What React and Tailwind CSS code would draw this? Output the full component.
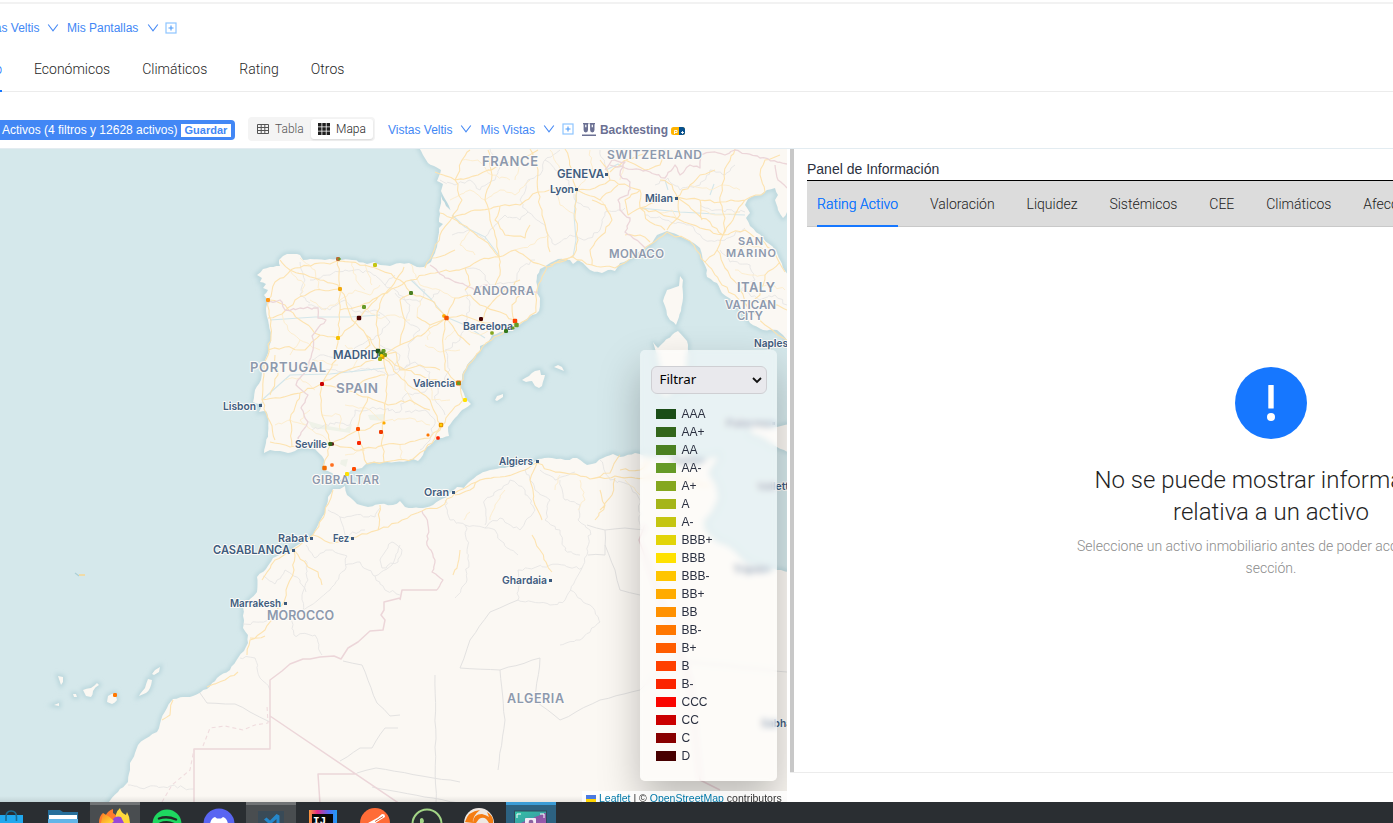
import React from "react";

const RATINGS = [
  ["AAA", "#1b4d17"], ["AA+", "#33661b"], ["AA", "#4b8021"], ["AA-", "#669a27"],
  ["A+", "#85a71f"], ["A", "#a5b518"], ["A-", "#c4c511"], ["BBB+", "#e2d408"],
  ["BBB", "#ffe100"], ["BBB-", "#ffc500"], ["BB+", "#ffab00"], ["BB", "#ff9100"],
  ["BB-", "#ff7700"], ["B+", "#ff5d00"], ["B", "#ff4000"], ["B-", "#fb2500"],
  ["CCC", "#fa0500"], ["CC", "#cb0000"], ["C", "#880000"], ["D", "#470000"],
];

// Splits every segment of a polyline into short steps and nudges them, so lines look surveyed.
function roughen(path, step, amp, seed) {
  let s = seed;
  const rand = () => {
    s = (s * 1664525 + 1013904223) % 4294967296;
    return s / 4294967296 - 0.5;
  };
  const tokens = path.match(/[MLZ]|-?[\d.]+/g);
  let out = "";
  let prev = null;
  let start = false;
  for (let i = 0; i < tokens.length; ) {
    const t = tokens[i];
    if (t === "Z") { out += "Z"; i++; continue; }
    if (t === "M") { start = true; i++; continue; }
    if (t === "L") { i++; continue; }
    const x = +t;
    const y = +tokens[i + 1];
    i += 2;
    if (start) {
      out += `M${x} ${y}`;
      start = false;
    } else {
      const dx = x - prev[0];
      const dy = y - prev[1];
      const n = Math.max(1, Math.round(Math.hypot(dx, dy) / step));
      for (let k = 1; k < n; k++) {
        const px = prev[0] + (dx * k) / n + rand() * amp * 2;
        const py = prev[1] + (dy * k) / n + rand() * amp * 2;
        out += `L${px.toFixed(1)} ${py.toFixed(1)}`;
      }
      out += `L${x} ${y}`;
    }
    prev = [x, y];
  }
  return out;
}

const LAND = [
  // Iberia, France and Italy
  "M418 145 L423 155 L428 163 L434 166 L441 170 L439 176 L437 181 L443 184 L441 191 L445 199 L449 206 L453 214 L446 206 L441 196 L439 222 L443 224 L439 228 L437 247 L435 253 L431 262 L424 267 L417 267 L409 263 L400 263 L390 266 L380 265 L374 262 L367 264 L352 260 L338 259 L325 260 L310 259 L303 260 L300 255 L293 254 L287 254 L283 256 L279 260 L280 266 L270 267 L263 269 L257 275 L262 278 L260 282 L266 284 L263 288 L268 290 L264 295 L268 302 L266 308 L268 320 L271 337 L269 350 L266 358 L263 367 L261 380 L255 390 L253 402 L259 404 L263 402 L259 412 L266 411 L268 417 L268 433 L266 443 L264 453 L270 450 L275 451 L280 451 L288 453 L295 451 L303 448 L315 449 L322 456 L325 462 L324 470 L332 473 L340 480 L345 478 L347 474 L353 469 L362 468 L367 463 L383 462 L395 462 L407 461 L413 459 L418 461 L423 455 L427 447 L438 438 L449 436 L448 427 L455 418 L462 410 L471 404 L465 397 L460 387 L462 375 L467 365 L480 350 L480 346 L486 344 L492 335 L508 330 L517 327 L525 320 L539 311 L540 298 L537 293 L537 275 L540 269 L547 265 L558 259 L570 260 L573 264 L578 260 L583 263 L590 270 L602 273 L608 270 L615 271 L620 263 L628 260 L642 250 L652 243 L657 235 L667 231 L678 235 L690 241 L700 248 L703 261 L707 270 L707 277 L717 283 L722 293 L732 300 L743 313 L750 323 L763 330 L777 330 L783 335 L790 345 L790 278 L785 271 L780 260 L775 250 L763 238 L750 226 L746 218 L750 213 L745 205 L748 199 L753 196 L760 195 L767 190 L775 188 L778 195 L775 200 L778 210 L783 218 L790 210 L790 145 Z",
  "M680 276 L683 280 L683 298 L681 311 L676 325 L670 320 L667 315 L665 306 L663 301 L667 290 L679 286 Z",
  "M653 342 L658 348 L664 342 L672 335 L678 331 L687 341 L688 352 L686 380 L682 389 L674 389 L668 397 L660 395 L660 370 L656 352 Z",
  "M522 380 L529 376 L535 371 L540 370 L541 375 L545 375 L542 386 L539 388 L535 386 L532 381 L526 382 Z",
  "M554 367 L558 365 L562 367 L564 371 Z",
  "M495 400 L497 396 L503 394 L503 397 L497 401 Z",
  "M750 428 L757 425 L765 429 L777 427 L790 424 L790 452 L784 450 L777 447 L763 438 L751 434 Z",
  // North Africa
  "M107 804 L118 792 L128 782 L130 770 L130 763 L135 753 L138 745 L145 739 L157 732 L161 720 L167 708 L173 699 L183 697 L193 696 L207 689 L217 678 L230 670 L238 658 L244 651 L248 643 L248 635 L243 628 L244 620 L243 607 L250 599 L257 592 L257 577 L266 569 L273 558 L293 548 L304 542 L313 535 L320 521 L325 513 L328 497 L333 489 L340 489 L345 486 L347 495 L357 504 L368 507 L380 504 L393 505 L400 501 L405 507 L423 508 L433 505 L440 500 L447 497 L452 491 L457 487 L464 488 L468 483 L480 474 L490 470 L500 468 L513 467 L533 463 L538 459 L552 458 L565 460 L577 458 L587 465 L596 463 L603 458 L613 454 L620 457 L635 453 L650 457 L668 456 L683 452 L696 457 L705 459 L718 455 L716 462 L709 472 L717 487 L718 499 L712 512 L704 521 L705 530 L716 541 L730 547 L747 563 L760 567 L777 570 L790 572 L790 806 Z",
  // Canary Islands
  "M58 676 L63 677 L63 682 L61 685 Z", "M73 694 L76 694 L77 697 L74 697 Z", "M54 705 L59 703 L59 706 Z",
  "M83 690 L91 688 L97 683 L99 685 L93 691 L91 697 L86 696 Z",
  "M108 696 L115 693 L117 700 L112 704 L107 702 Z",
  "M139 696 L145 688 L148 679 L152 680 L150 688 L146 693 Z", "M152 674 L155 670 L160 667 L159 672 L154 675 Z",
];

const ROADS = `M382 355 L378 335 L377 318 L382 298 L396 280 L404 267 M382 355 L366 335 L352 320 L346 300 L338 285 L315 278 L290 270 L280 260 M382 355 L356 367 L340 373 L321 384 L300 393 L280 398 L262 400
M382 355 L388 375 L386 400 L384 421 L370 428 L358 430 L344 438 L331 444 L325 460 L324 470 M384 421 L382 440 L384 462 M358 430 L363 452 L367 464 L384 462 L413 459 L425 450 L440 430 L449 414 L463 400 L460 383 L468 365 L486 343 L505 331 L518 325 L536 312 L537 290 L547 267 L573 257 L592 265 L615 268 L642 251 L667 232 L690 241 L705 262 L722 285 L746 305 L765 325 L787 340
M382 355 L400 345 L425 333 L446 318 L462 315 L481 322 L500 326 L515 324 M446 318 L430 300 L411 293 L400 280 L380 270 L350 262 L320 263 L295 268 L275 282 L268 300 L271 335 L264 370 L262 400 M382 355 L405 370 L430 380 L458 383 M382 355 L408 385 L430 400 L441 425 L430 438 L405 444 L384 445 L360 450 L331 444 M446 318 L443 345 L445 370 L459 383 M331 444 L312 444 L290 447 L270 442 M262 400 L268 418 L275 440 M331 444 L322 415 L321 384 L336 360 L338 338 L340 310 L340 290 L338 260 M338 338 L320 335 L300 320 L285 305 L270 300 M338 338 L360 318 L378 297 L411 280 M340 310 L360 306 L378 297 M268 350 L285 347 L305 350 L320 335 M275 355 L278 375 L270 395 M268 318 L282 314 L295 300 L315 290 L338 289 M300 393 L290 420 L292 447 M321 384 L345 390 L368 397 L388 405 L410 400 L430 410 M368 397 L360 415 L358 430 M385 375 L365 380 L350 390 M360 355 L370 345 L366 335 M382 355 L396 352 L400 370 L420 365 L440 370 M400 345 L405 320 L400 300 L411 293 M417 317 L430 325 L446 318 L455 330 L470 345 M446 318 L455 298 L470 295 L480 305 L500 312 L515 320 M481 322 L490 305 L505 290 L520 280 M515 322 L512 305 L520 295
M411 280 L425 275 L440 272 L465 268 L480 260 L499 257 L515 250 L530 260 L547 267 M425 268 L432 255 L440 235 L452 218 L470 230 L488 243 L499 257 L495 235 L490 220 L485 200 L492 175 L488 150 M452 218 L462 200 L455 180 L462 160 L470 150 M452 218 L475 210 L500 206 L520 205 L538 192 L555 188 L577 190 M452 218 L440 213 M435 172 L455 180 L478 175 L500 165 L520 158 L538 150 M538 192 L538 170 L530 149 M538 192 L542 215 L548 235 L550 252 M577 190 L575 215 L578 240 L574 255 L550 265 M577 190 L595 188 L610 180 L608 172 L600 160 M577 190 L572 170 L565 149 M577 190 L600 200 L618 185 M592 265 L590 250 L602 235 L612 220 L605 205 L592 200 M499 257 L500 275 L493 290 M500 206 L495 220 L505 235 L525 238 L530 225 M455 250 L445 255 L432 258 M465 268 L470 285 L465 290 M610 172 L625 160 L640 155 L655 149 M625 160 L645 170 L660 165 L665 150 M610 180 L640 190 L640 208 L655 202 L677 197 L700 200 L720 202 L745 200 L765 192 M640 208 L650 222 L665 230 M640 208 L660 213 L680 220 L700 228 L723 235 L745 230 L765 243 L777 258 L785 272 M677 197 L680 215 L667 230 M677 197 L695 212 L710 222 L723 235 L717 250 L705 262 M717 250 L725 268 L738 285 L746 305 L765 300 L787 310 M677 197 L672 185 L660 180 M677 197 L690 185 L700 175 L715 170 M700 200 L702 220 M723 235 L725 218 L720 202 L722 185 L727 165 L735 149 M745 200 L735 215 L723 235 M765 192 L760 175 L765 160 L780 155 M746 305 L760 295 L765 275 L780 262 M640 190 L625 200 L628 215 L640 208 M625 235 L640 235 L650 242
M333 490 L325 513 L313 535 L294 549 L275 560 L262 580 M313 535 L330 543 L352 538 L378 530 L402 520 L422 511 L440 507 L455 493 L480 480 L500 477 L525 470 L537 463 L550 470 L570 474 L590 479 L615 476 L635 478 L660 475 L690 482 L710 485 M378 530 L380 505 M294 550 L294 570 L286 590 L284 602 L265 630 L250 640 L247 655 M294 550 L308 567 L318 572 L322 585 M265 636 L250 638 M173 700 L170 715 L162 720 M207 687 L225 680 L238 672 M537 463 L530 480 L535 505 L542 520 M590 479 L610 473 L620 455 M600 490 L605 505 L595 520 M620 470 L640 470 L650 460 M480 480 L470 490 L455 495 M532 535 L540 550 L552 572 M615 478 L612 495 L600 510 M460 550 L458 563 L453 575`;

const MINOR_ROADS = `M290 270 L305 285 L300 295 M300 258 L315 270 L320 290 M352 262 L356 280 L365 290 M365 264 L372 285 M411 264 L420 285 L440 290 L455 298 M417 317 L420 300 M282 314 L288 330 L300 340 L290 355 M300 365 L315 360 L338 365 M345 345 L360 355 L350 370 M300 340 L320 350 M405 370 L405 390 L415 405 M430 380 L432 400 L450 400 M345 405 L370 410 L384 421 L410 418 L430 425 M340 430 L340 415 L322 415 M310 410 L300 420 L312 430 L331 444 M345 455 L365 450 M400 444 L402 460 M425 345 L440 352 L460 350 M430 325 L428 340 M455 330 L445 340 M465 330 L480 335 L492 330 M310 300 L325 310 L340 300 L355 290 L370 295 L380 285 M360 306 L378 318 L395 315 L410 320 M285 380 L300 378 L315 390 M275 425 L290 420 L305 425 M450 200 L470 190 L485 200 L500 190 L515 195 L530 180 M462 160 L478 160 L492 175 L510 180 M520 158 L515 180 M555 188 L560 205 L575 215 M548 235 L530 245 L515 250 M600 200 L610 215 M625 160 L620 180 M550 150 L560 170 L572 170 M590 150 L592 170 L577 190 M470 230 L460 245 L475 255 M680 220 L672 210 L660 213 M690 185 L710 190 L722 185 L740 190 M700 210 L720 215 L740 212 M735 250 L750 245 L765 250 M735 270 L750 275 L765 275 M750 290 L770 285 L785 290 M505 490 L495 505 L490 520 M560 475 L555 490 M580 480 L585 500 L578 510 M625 480 L640 495 M470 512 L464 520`;

const ADMIN = `M300 262 L305 280 L300 295 L310 303 M310 280 L330 275 L345 270 L370 272 L385 285 L395 275 M308 305 L330 310 L345 300 L355 312 L375 310 L390 322 L380 335 L360 345 L345 358 L320 355 L312 360 M385 285 L398 292 L410 305 L405 320 L420 330 L408 345 L410 365 L395 370 L400 355 L380 345 M320 370 L345 372 L368 368 L390 375 L415 362 L430 372 L425 392 L405 395 L400 412 L380 408 L355 410 L350 425 L330 423 L312 430 M405 412 L425 410 L435 420 L430 440 L420 450 M430 300 L440 290 M395 293 L405 300 L420 302 L425 290 L410 280 M465 290 L470 305 L465 325 L460 340 L445 350 L450 370 L440 385 L435 400 L445 415
M440 180 L455 185 L470 180 L480 190 L495 180 L500 165 L490 149 M452 235 L470 230 L485 240 L495 225 L505 215 L520 220 L528 212 L520 200 L528 180 L540 175 L545 160 L560 150 M528 212 L545 225 L555 245 L570 235 L585 240 L600 230 L605 212 L625 208 M465 268 L480 270 L490 285 L515 282 L520 268 L535 260 M545 160 L565 175 L575 200 L590 210 M608 172 L600 150 M655 185 L668 178 L680 190 L700 185 L710 170 L725 175 L735 165 M645 215 L665 220 L690 225 L705 240 L725 240 L745 228 M720 250 L730 262 L750 265 L755 280 L740 290 L760 300 L775 295 L787 305 M700 205 L715 210 L745 212
M328 510 L340 517 L355 515 L375 517 L380 508 M340 517 L345 535 L365 530 M306 545 L315 558 L330 550 L347 556 L345 570 L330 590 L318 600 L303 610 L302 595 L308 580 L305 560 M345 565 L360 562 L375 576 L392 565 L400 545 M263 576 L275 584 L285 570 L300 580 L306 592 M375 576 L385 590 L400 595 M243 624 L260 622 L290 618 L294 635 L315 635 L322 655 M240 658 L255 658 L260 678 L270 690 M128 785 L140 788 L170 786 L194 789
M445 500 L450 520 L465 525 L485 528 L500 518 L520 530 L535 510 L525 490 L510 480 L498 490 L485 500 L485 525 M465 525 L468 545 L467 580 L455 598 M525 470 L535 490 L550 500 L545 520 L560 530 L565 550 L580 555 M560 480 L565 500 L580 505 L578 520 L590 530 L587 555 L582 568 L550 565 L518 570 L518 600 L550 605 L565 600 L582 568 M570 590 L590 605 L600 622 L580 640 L560 645 M518 555 L500 540 L495 530 L485 528 M380 560 L392 542 L402 550 L398 562 L382 568 Z M600 460 L610 480 L630 485 L640 500 L640 530 M540 470 L555 480 L575 472`;

const ADMIN_STRAIGHT = `M200 693 L207 703 L235 704 L250 712 L270 722 M343 661 L362 665 L377 703 L390 716 L400 715 M340 761 L360 748 L372 748 L385 728 L398 728 M357 773 L376 768 L460 782 M587 525 L605 530 L605 555 L588 555 M605 530 L625 528 L645 530 M605 545 L615 570 L620 590 L640 595 M518 600 L490 612 L470 640 L460 668 L500 670 L540 658 M540 658 L535 700 M500 670 L505 720 L498 770 M372 787 L460 803 M435 675 L436 802 M535 700 L560 720 L600 700 L640 690 L670 660 L787 672`;

const BORDERS = `M268 303 L280 300 L285 310 L300 308 L318 308 L318 318 L326 320 L312 336 L313 350 L308 368 L300 378 L296 385 L308 395 L301 408 L308 422 L298 438 L298 448 M430 265 L440 274 L455 282 L465 285 L475 290 L487 285 L510 290 L538 293 M605 170 L612 160 L625 162 L620 175 L630 182 L628 195 L618 200 L620 210 L630 218 L625 232 L640 243 L645 248 M610 165 L625 168 L650 172 L665 178 L675 165 L680 175 L690 165 L700 168 L700 155 L715 152 L725 155 L735 150 L760 158 L787 164 M775 165 L778 180 L787 188
M422 511 L428 525 L427 545 L435 560 L432 572 L443 580 L437 590`;
const BORDERS_STRAIGHT = `M437 590 L402 590 L400 600 M400 598 L384 602 L384 610 L381 615 L385 620 L383 630 L370 631 L358 642 L348 648 L341 659 L334 656 L320 657 L310 659 L303 659 L290 664 L282 671 L270 680 L270 749 L194 749 L194 804 M270 716 L400 804 M357 774 L318 774 L320 804 M645 525 L639 540 L650 570 L675 640 L690 680 L695 730 L700 780 L720 790`;

const LAND_PATH = LAND.map((p, i) => roughen(p, 4, 0.7, 11 + i)).join(" ");
const ROADS_PATH = roughen(ROADS, 5, 1.3, 5);
const MINOR_PATH = roughen(MINOR_ROADS, 4, 1.4, 7);
const ADMIN_PATH = roughen(ADMIN, 3.5, 1.6, 21);
const ADMIN_LONG_PATH = roughen(ADMIN_STRAIGHT, 9, 0.6, 2);
const BORDERS_PATH = roughen(BORDERS, 3.5, 1.2, 31);

const CITIES = [
  ["GENEVA", 557, 178, 47, 606, 174, 12], ["Lyon", 550, 193, 24, 576, 189, 11], ["Milan", 645, 202, 28, 676, 198, 11],
  ["Barcelona", 463, 330, 50, 0, 0, 11], ["MADRID", 333, 359, 46, 0, 0, 12], ["Valencia", 413, 387, 42, 0, 0, 11],
  ["Lisbon", 223, 410, 33, 260, 405, 11], ["Seville", 295, 448, 32, 0, 0, 11], ["Algiers", 499, 465, 34, 537, 461, 11],
  ["Oran", 424, 496, 25, 453, 492, 11], ["Rabat", 278, 542, 30, 311, 538, 11], ["Fez", 333, 542, 16, 352, 538, 11],
  ["CASABLANCA", 213, 554, 77, 293, 550, 12], ["Ghardaia", 502, 584, 45, 550, 580, 11], ["Marrakesh", 230, 607, 51, 285, 603, 11],
  ["Naples", 754, 347, 34, 0, 0, 11], ["Palermo", 726, 427, 45, 773, 423, 11], ["Tunis", 671, 464, 29, 702, 460, 11],
  ["Valletta", 757, 490, 38, 0, 0, 11], ["Tripoli", 733, 573, 33, 768, 569, 11], ["Sabha", 761, 727, 31, 0, 0, 11],
];

const COUNTRIES = [
  ["FRANCE", 482, 165.5, 56, 13], ["SWITZERLAND", 607, 158.8, 95, 12], ["MONACO", 609, 258, 55, 11.5], ["SAN", 738, 245, 25, 11],
  ["MARINO", 726, 257, 50, 11], ["ITALY", 737, 291.5, 38, 13], ["VATICAN", 725, 308.5, 51, 11.5], ["CITY", 737, 320, 26, 11.5],
  ["ANDORRA", 473, 295, 61, 11.5], ["PORTUGAL", 250, 371.5, 76, 13], ["SPAIN", 336, 392.5, 42, 13.5], ["GIBRALTAR", 312, 483.7, 67, 11.5],
  ["MOROCCO", 267, 620, 67, 12.5], ["ALGERIA", 507, 703, 57, 12.5],
];

const ASSETS = [
  [338, 259, "#bb6b35", 4], [339.5, 259, "#669a27", 2.5], [375, 265, "#c4c511", 4], [340, 289, "#f0a810", 4], [268, 300, "#ff9614", 4],
  [411, 293, "#4b8021", 4], [364, 307, "#669a27", 4], [359, 318, "#470000", 4.5], [338, 338, "#f5c000", 4],
  [444, 316, "#ffab00", 3.5], [446.5, 318, "#f05000", 4.5], [481, 319, "#470000", 4], [515, 321, "#ff4000", 4.5],
  [516.5, 325, "#669a27", 4.5], [513, 328, "#669a27", 3], [506, 331, "#33781b", 4], [492, 333, "#85a71f", 3.5],
  [378, 351, "#1b4d17", 4.5], [383.5, 351, "#669a27", 4], [381, 354, "#4b8021", 5], [385, 355, "#73981f", 4],
  [382.5, 357, "#dc9f00", 4], [380, 359, "#a5b518", 4], [381.5, 355.5, "#ffcf00", 3],
  [322, 384, "#cb0000", 4], [458.5, 383, "#e56b00", 5], [458.7, 383.2, "#669a27", 3.5], [465, 400, "#ffe100", 4],
  [441, 425, "#e99600", 4.5], [441, 425, "#ffd400", 2.3], [428, 435, "#ff7700", 3], [438, 438, "#fb2500", 3.5],
  [384, 423, "#ffab00", 3], [381, 432, "#ef3900", 4], [358, 429, "#ff5000", 4], [359, 443, "#fb2500", 4],
  [332.2, 444, "#5e1818", 3.5], [330.3, 444, "#33661b", 4], [332, 465, "#ff7020", 3.5], [324.5, 468, "#f06c00", 4.5],
  [354, 469, "#ff4a00", 4], [347, 474, "#ffe100", 4], [115, 695, "#ff7700", 4],
];

function MapCanvas() {
  return (
    <svg className="block h-full w-full" viewBox="0 149 787 653" preserveAspectRatio="none">
      <defs>
        <filter id="soft"><feGaussianBlur stdDeviation="2" /></filter>
        <linearGradient id="fade" x1="0" y1="0" x2="0" y2="1">
          <stop offset="0" stopColor="#000" stopOpacity="0" />
          <stop offset="1" stopColor="#000" stopOpacity="0.08" />
        </linearGradient>
      </defs>
      <rect x="0" y="149" width="787" height="653" fill="#d5e8eb" />
      <path d={LAND_PATH} fill="none" stroke="#b9d6dc" strokeWidth="4" filter="url(#soft)" />
      <path d={LAND_PATH} fill="#fbf8f3" />
      <path d="M308 421 L322 425 L345 429 L352 424 L350 433 L330 430 L312 428Z M368 415 L385 414 L383 421 L370 420Z M341 460 L348 459 L346 467 L340 464Z" fill="#eff2e8" />
      <g fill="none" strokeLinejoin="round">
        <path d={ADMIN_PATH} stroke="#e6e5e4" strokeWidth="0.9" />
        <path d={ADMIN_LONG_PATH} stroke="#e3e2e1" strokeWidth="1" />
        <path d="M452 215 L465 227 L485 237 L500 257 M411 280 L430 298 L446 317 L465 325 L485 338 M577 190 L574 215 L576 240 L573 257 M640 208 L680 212 L715 214 L745 215 M262 400 L290 375 L330 374 L385 368 M270 320 L315 317 L350 317 L380 315 M606 170 L618 164 L624 168 M665 180 L668 190 M710 195 L714 184" stroke="#d3e6ea" strokeWidth="1.1" />
        <path d={MINOR_PATH} stroke="#fdeed0" strokeWidth="1" />
        <path d={ROADS_PATH} stroke="#fde3b0" strokeWidth="1.1" />
        <path d={BORDERS_PATH} stroke="#ecd6d9" strokeWidth="1.3" />
        <path d={BORDERS_STRAIGHT} stroke="#ecd6d9" strokeWidth="1.5" />
        <path d="M162 802 L172 785 L190 770 L194 749 M203 746 L210 728 L225 726 L243 730 L255 725 L268 723 L267 706" stroke="#f0dcde" strokeWidth="1.1" strokeDasharray="4 3" />
      </g>
      <g fill="none" strokeWidth="1.2">
        <path d="M75 573 L79 576" stroke="#adcfd5" />
        <path d="M79 575 L85 575" stroke="#f0dba8" strokeWidth="2" />
      </g>
      <g fontFamily="Inter, 'Liberation Sans', sans-serif" paintOrder="stroke" stroke="#fdfbf8" strokeWidth="2" strokeLinejoin="round">
        {COUNTRIES.map(([t, x, y, w, s]) => (
          <text key={t} x={x} y={y} textLength={w} fontSize={s} fontWeight="600" fill="#8d99ad">{t}</text>
        ))}
        {CITIES.map(([t, x, y, w, , , s]) => (
          <text key={t} x={x} y={y} textLength={w} lengthAdjust="spacingAndGlyphs" fontSize={s} fontWeight="600" fill="#405c7e">{t}</text>
        ))}
      </g>
      {CITIES.filter((c) => c[4] > 0).map(([t, , , , mx, my]) => (
        <rect key={t} x={mx - 1} y={my - 1} width="3" height="3" fill="#3c5a7d" />
      ))}
      {ASSETS.map(([x, y, c, s], i) => (
        <rect key={i} x={x - s / 2} y={y - s / 2} width={s} height={s} rx="1.2" fill={c} />
      ))}
      <rect x="0" y="796" width="787" height="6" fill="url(#fade)" />
    </svg>
  );
}

const Chevron = () => (
  <svg className="h-3 w-3 shrink-0" viewBox="0 0 12 12" fill="none" stroke="#4589f5" strokeWidth="1.1"><path d="M1.2 2.5 L6 8.8 L10.8 2.5" /></svg>
);
const PlusBox = () => (
  <svg className="h-3 w-3 shrink-0" viewBox="0 0 12 12" fill="none"><rect x="1" y="1" width="10" height="10" stroke="#8ec5ff" strokeWidth="1.2" /><path d="M3.5 6 H8.5 M6 3.5 V8.5" stroke="#4d9bf8" strokeWidth="1.1" /></svg>
);

function Legend() {
  return (
    <div className="absolute left-[640px] top-[201px] flex h-[431px] w-[137px] flex-col rounded-[5px] bg-white/45 pl-[11px] pt-4 shadow-[0_19px_42px_rgba(0,0,0,0.25)] backdrop-blur-[3px]">
      <div className="flex h-7 w-[116px] items-center justify-between rounded-[6px] border border-[#cfcfd3] bg-[#e9e9ed] pl-[7.5px] pr-1 font-['Noto_Sans',sans-serif] text-[13.33px] text-black">
        <span>Filtrar</span>
        <svg className="h-[10px] w-[10px]" viewBox="0 0 10 10" fill="none" stroke="#111" strokeWidth="1.8"><path d="M1 3 L5 7 L9 3" /></svg>
      </div>
      <ul className="ml-[5px] mt-[11px]">
        {RATINGS.map(([name, color]) => (
          <li key={name} className="flex h-[18px] items-center gap-[5.5px] text-xs text-[#2b3040]">
            <span className="h-[10px] w-5" style={{ backgroundColor: color }} />
            <span>{name}</span>
          </li>
        ))}
      </ul>
    </div>
  );
}

const INFO_TABS = ["Rating Activo", "Valoración", "Liquidez", "Sistémicos", "CEE", "Climáticos", "Afecciones"];

function InfoPanel() {
  return (
    <section className="h-[624px] w-[603px] overflow-hidden border-b border-[#ececec] bg-white">
      <div className="flex h-[623px]">
        <div className="w-1 shrink-0 bg-[#c8c8c8]" />
        <div className="ml-[13px] w-[928px] shrink-0">
          <h2 className="h-8 border-b border-black pt-[11px] text-sm leading-[18px] text-[#2b3040]">Panel de Información</h2>
          <nav className="flex h-[46px] gap-[31.9px] border-b border-[#c9c9c9] bg-[#dcdcdc] px-[10px] font-[Roboto,sans-serif] text-sm font-light text-[#222]">
            {INFO_TABS.map((t, i) => (
              <span key={t} className={i === 0 ? "h-[46px] shrink-0 border-b-2 border-[#1677ff] leading-[46px] text-[#1677ff] [text-shadow:0_0_0.25px_currentcolor]" : "h-[46px] shrink-0 leading-[46px]"}>{t}</span>
            ))}
          </nav>
          <div className="flex flex-col items-center pt-[140px] font-[Roboto,sans-serif] font-light">
            <svg className="h-[72px] w-[72px]" viewBox="0 0 72 72"><circle cx="36" cy="36" r="36" fill="#1677ff" /><rect x="33.3" y="18" width="5.4" height="23.5" rx="0.5" fill="#fff" /><circle cx="36" cy="50" r="4" fill="#fff" /></svg>
            <p className="mt-[25px] w-[392px] text-center text-2xl leading-8 text-[#1f1f1f]">No se puede mostrar información relativa a un activo</p>
            <p className="mt-[7px] w-[400px] text-center text-sm leading-[22px] text-[#8c8c8c]">Seleccione un activo inmobiliario antes de poder acceder a esta sección.</p>
          </div>
        </div>
      </div>
    </section>
  );
}

function Taskbar() {
  return (
    <footer className="h-[21px] w-full overflow-hidden bg-[#2a2e32]">
      <svg className="block h-[21px] w-[600px]" viewBox="0 802 600 21">
        <defs>
          <linearGradient id="ij" x1="0" y1="0" x2="1" y2="0"><stop offset="0" stopColor="#fe9a3c" /><stop offset=".3" stopColor="#e62b86" /><stop offset=".7" stopColor="#4e6af3" /><stop offset="1" stopColor="#219df5" /></linearGradient>
          <linearGradient id="cap" x1="0" y1="0" x2="1" y2="1"><stop offset="0" stopColor="#31c5a5" /><stop offset=".55" stopColor="#3aa5a5" /><stop offset=".56" stopColor="#8758a2" /><stop offset="1" stopColor="#9e58b0" /></linearGradient>
          <linearGradient id="fox" x1="0" y1="0" x2="1" y2="1"><stop offset="0" stopColor="#ff7d25" /><stop offset=".5" stopColor="#ffb12b" /><stop offset="1" stopColor="#ffe13c" /></linearGradient>
        </defs>
        <g fill="#494d50"><rect x="90" y="802" width="50" height="21" /><rect x="246" y="802" width="50" height="21" /></g>
        <g fill="#717476"><rect x="90" y="802" width="50" height="3" /><rect x="246" y="802" width="50" height="3" /></g>
        <rect x="506" y="802" width="50" height="21" fill="#2d6281" /><rect x="506" y="802" width="50" height="3" fill="#3b9cd6" />
        <rect x="0" y="815" width="23" height="8" fill="#20a8ee" /><path d="M6 821 V817 Q6 811 11 811 Q16.500 811 16.500 817 V821" fill="none" stroke="#1b6c92" strokeWidth="1.6" />
        <path d="M48 810 H60 L63 812 H78 V823 H48Z" fill="#276f9b" /><rect x="49" y="815" width="28" height="5" fill="#fff" /><rect x="48" y="819" width="30" height="4" fill="#62b5e8" />
        <path d="M99 823 Q99 816 103 813 L105 817 Q107 811 113 809 L113 813 Q120 817 120 823Z" fill="#ff7b2e" /><path d="M116 823 Q114 813 120 808 Q121 813 126 815 L127 812 Q130 817 130 823Z" fill="#ffd83b" /><path d="M112 823 Q113 815 121 817 L124 823Z" fill="#9648d8" /><path d="M103 813 Q109 816 114 821 L112 823 H101Z" fill="url(#fox)" />
        <circle cx="167" cy="824" r="14.500" fill="#1ed760" /><path d="M159 818.500 Q167 815.500 176 819.500 M160 823.500 Q167 820.500 174 824" stroke="#202a25" strokeWidth="2.400" strokeLinecap="round" fill="none" />
        <circle cx="219" cy="824" r="15.500" fill="#5965f2" /><path d="M210 824 Q211 818 215 817 L217 818.500 H221 L223 817 Q227 818 228 824Z" fill="#fff" />
        <rect x="258" y="811" width="26" height="12" fill="#394a57" /><path d="M264 819.500 L266.500 817.500 L270 820.500 L276.500 814 L279.500 815.500 V823 H276.500 V819 L272 823 H268Z" fill="#2588cc" />
        <rect x="309" y="810" width="28" height="13" fill="url(#ij)" /><rect x="312" y="814" width="21" height="9" fill="#080808" />
        <circle cx="375" cy="823" r="15" fill="#ff6c37" /><path d="M368 823 L378 817.500 L382 814 L384.500 814.500 L385 817 L380 820 L374 824Z" fill="#fff" /><path d="M375 821.500 L383 816.500" stroke="#d9643c" />
        <circle cx="427" cy="824" r="14.500" fill="none" stroke="#a3d586" strokeWidth="2" /><path d="M420 819 Q423 816 424 821 L423 824 H420Z" fill="#a3d586" />
        <circle cx="479" cy="823" r="15" fill="#eee8e2" /><path d="M465 822 Q468 811 480 810 Q472 816 473 823Z M487 812 Q494 816 493 823 H489 Q485 815 479 819 L476 823 H473 Q473 814 482 814 Q486 815 489 817Z" fill="#f57d13" />
        <rect x="514.500" y="811" width="32" height="13" fill="url(#cap)" stroke="#314a5a" /><path d="M517 818 V814 H521 M544 818 V814 H540" fill="none" stroke="#fff" /><rect x="525" y="818" width="11" height="6" rx="1" fill="#f2e9f4" /><circle cx="531" cy="822" r="2.300" fill="#8d62a0" />
        <text x="313" y="823.500" fontFamily="Liberation Mono, monospace" fontWeight="700" fontSize="11" fill="#fff">IJ</text>
      </svg>
    </footer>
  );
}

export default function App() {
  return (
    <div className="flex h-[823px] w-[1393px] flex-col overflow-hidden bg-white font-['Liberation_Sans',Arial,sans-serif]">
      <div className="mt-[2px] h-[2px] bg-[#f2f2f2]" />
      <div className="flex h-12 items-center text-xs text-[#4287f5]">
        <span className="flex w-[39.5px] shrink-0 justify-end overflow-hidden whitespace-nowrap">Pantallas Veltis</span>
        <span className="ml-[7.5px]"><Chevron /></span>
        <span className="ml-2 w-[72px]">Mis Pantallas</span>
        <span className="ml-2"><Chevron /></span>
        <span className="ml-[6px]"><PlusBox /></span>
      </div>
      <nav className="flex h-10 items-stretch gap-8 border-b border-[#ececec] font-[Roboto,sans-serif] text-sm font-light text-[#1f1f1f]">
        <span className="-mb-px flex w-[2px] justify-end overflow-hidden border-b-2 border-[#1677ff] pt-[7px] text-[#1677ff]">Activo</span>
        {["Económicos", "Climáticos", "Rating", "Otros"].map((t) => (
          <span key={t} className="pt-[7px]">{t}</span>
        ))}
      </nav>
      <div className="flex h-[57px] items-start border-b border-[#e3ecf1] text-xs text-[#4287f5]">
        <div className="mt-[28px] flex h-5 w-[235px] shrink-0 items-center whitespace-nowrap rounded-r-[4px] bg-[#4287f5] pl-[2px] text-white">
          <span>Activos (4 filtros y 12628 activos)</span>
          <span className="ml-[3.5px] flex h-[13px] w-[50px] items-center justify-center bg-white text-[11px] font-bold text-[#4287f5]">Guardar</span>
        </div>
        <div className="ml-[13px] mt-[25px] flex h-6 w-[127px] items-center rounded-[4px] bg-[#f4f4f4] p-[2px] font-[Roboto,sans-serif] font-light">
          <div className="flex w-[61px] items-center gap-[6px] pl-[7px] text-[#555]">
            <svg className="h-3 w-3" viewBox="0 0 12 12" fill="none" stroke="#555"><path d="M.5 1.500 H11.500 V10.500 H.5Z M.5 4.500 H11.500 M.5 7.500 H11.500 M4.200 1.500 V10.500 M7.800 1.500 V10.500" /></svg>
            <span>Tabla</span>
          </div>
          <div className="flex h-5 w-[62px] items-center gap-[6px] rounded-[3px] bg-white pl-[7px] text-[#1f1f1f] shadow-[0_1px_2px_rgba(0,0,0,0.12)]">
            <svg className="h-3 w-3" viewBox="0 0 12 12" fill="#1f1f1f"><path d="M0 0h3.500v3.500H0zM4.300 0h3.500v3.500H4.300zM8.600 0H12v3.500H8.600zM0 4.300h3.500v3.500H0zM4.300 4.300h3.500v3.500H4.300zM8.600 4.300H12v3.500H8.600zM0 8.600h3.500V12H0zM4.300 8.600h3.500V12H4.300zM8.600 8.600H12V12H8.600z" /></svg>
            <span>Mapa</span>
          </div>
        </div>
        <div className="ml-[13px] mt-[28px] flex h-[18px] items-center">
          <span className="pt-[2px]">Vistas Veltis</span>
          <span className="ml-2"><Chevron /></span>
          <span className="ml-2 pt-[2px]">Mis Vistas</span>
          <span className="ml-2"><Chevron /></span>
          <span className="ml-[7px]"><PlusBox /></span>
          <svg className="ml-2 h-[13px] w-[14px]" viewBox="0 0 14 12" preserveAspectRatio="none" fill="#6b7093"><path d="M1 0H6.500V1.200H6V6.500A2.200 2.200 0 0 1 1.600 6.500V1.200H1Z M7.600 0H13V1.200H12.500V6.500A2.200 2.200 0 0 1 8.100 6.500V1.200H7.600Z M0 10.500H14V12H0Z" /><path d="M3.200 1.500H4.400V4H3.200Z M9.700 1.500H10.900V4H9.700Z" fill="#fff" /></svg>
          <span className="ml-1 pt-[2px] font-bold text-[#6b7093]">Backtesting</span>
          <svg className="ml-[3px] mt-[4px] h-2 w-[14px]" viewBox="0 0 14 8"><rect width="14" height="8" rx="2.500" fill="#ffb400" /><path d="M8 0H11.500A2.500 2.500 0 0 1 14 2.500V5.500A2.500 2.500 0 0 1 11.500 8H8Z" fill="#07518f" /><path d="M3.500 7V3.500H6V5.500H3.500M10 5.500H13M11.500 4V7" fill="none" stroke="#fff" strokeWidth=".9" /></svg>
        </div>
      </div>
      <main className="flex h-[653px] bg-white">
        <div className="relative h-[653px] w-[787px] shrink-0 overflow-hidden">
          <MapCanvas />
          <Legend />
          <div className="absolute bottom-0 right-0 flex h-[11px] w-[205px] items-start overflow-hidden whitespace-nowrap bg-white/80 pl-[4px] text-[10.5px] leading-[14px] text-[#333]">
            <svg className="mr-[3px] mt-[4px] h-2 w-[10px] shrink-0" viewBox="0 0 10 8"><rect width="10" height="4" fill="#4c7be1" /><rect y="4" width="10" height="3" fill="#ffd500" /></svg>
            <span><span className="text-[#0078a8] underline">Leaflet</span> | © <span className="text-[#0078a8] underline">OpenStreetMap</span> contributors</span>
          </div>
        </div>
        <div className="ml-[3px]"><InfoPanel /></div>
      </main>
      <Taskbar />
    </div>
  );
}
